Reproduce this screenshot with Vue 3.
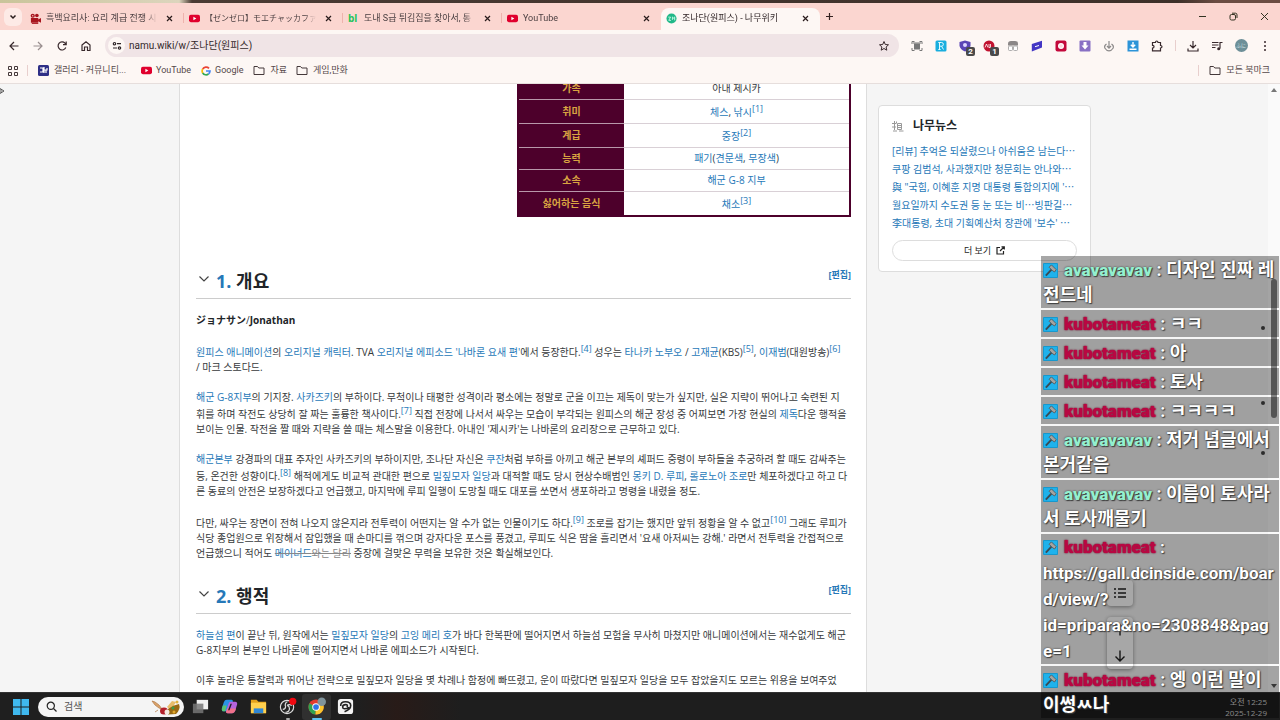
<script setup>
const tabs = [
  { icon: 'cam', title: '흑백요리사: 요리 계급 전쟁 시', active: false },
  { icon: 'yt', title: '【ゼンゼロ】モエチャッカファイ', active: false, ja: true },
  { icon: 'bl', title: '도내 S급 튀김집을 찾아서, 통', active: false },
  { icon: 'yt', title: 'YouTube', active: false },
  { icon: 'namu', title: '조나단(원피스) - 나무위키', active: true }
]

const news = [
  '[리뷰] 추억은 되살렸으나 아쉬움은 남는다⋯',
  '쿠팡 김범석, 사과했지만 청문회는 안나와⋯',
  '與 "국힘, 이혜훈 지명 대통령 통합의지에 \'⋯',
  '월요일까지 수도권 등 눈 또는 비⋯빙판길⋯',
  '李대통령, 초대 기획예산처 장관에 \'보수\' ⋯'
]

const chat = [
  { user: 'avavavavav', tone: 'mint', text: '디자인 진짜 레전드네' },
  { user: 'kubotameat', tone: 'red', text: 'ㅋㅋ' },
  { user: 'kubotameat', tone: 'red', text: '아' },
  { user: 'kubotameat', tone: 'red', text: '토사' },
  { user: 'kubotameat', tone: 'red', text: 'ㅋㅋㅋㅋ' },
  { user: 'avavavavav', tone: 'mint', text: '저거 념글에서 본거같음' },
  { user: 'avavavavav', tone: 'mint', text: '이름이 토사라서 토사깨물기' },
  { user: 'kubotameat', tone: 'red', text: 'https://gall.dcinside.com/board/view/?id=pripara&no=2308848&page=1', url: true },
  { user: 'kubotameat', tone: 'red', text: '엥 이런 말이 이썽ㅆ나' }
]
</script>

<template>
  <div class="screen">
    <div class="backdrop"></div>

    <header class="browser">
      <div class="tabstrip">
        <button class="tabsearch" aria-label="탭 검색">
          <svg width="8" height="8" viewBox="0 0 8 8"><path d="M1.5 2.500 4 5l2.500-2.500" fill="none" stroke="#2a1c1c" stroke-width="1.500" /></svg>
        </button>
        <div v-for="(t, i) in tabs" :key="i" class="tab" :class="{ active: t.active, last: i === 3 }">
          <svg v-if="t.icon === 'cam'" class="fav" viewBox="0 0 12 12"><circle cx="3" cy="3" r="2.300" fill="#a8151e" /><circle cx="7.500" cy="2.700" r="2" fill="#a8151e" /><path d="M1 5.500h8v5H1zM9 7l3-1.500v5L9 9z" fill="#a8151e" /><path d="M2 11.500h7" stroke="#a8151e" /><circle cx="3" cy="3" r=".7" fill="#fbd6d0" /></svg>
          <svg v-else-if="t.icon === 'yt'" class="fav" viewBox="0 0 12 12"><rect y="2" width="12" height="8" rx="2" fill="#e0002d" /><path d="M4.800 4.200v3.600L8 6z" fill="#fff" /></svg>
          <span v-else-if="t.icon === 'bl'" class="fav bl">bl</span>
          <svg v-else class="fav" viewBox="0 0 12 12"><circle cx="6" cy="6" r="5.500" fill="#20b888" /><path d="M2.500 4.500h2.500L3 8h2.500M7 4v3.500M7 5.500h2.500M9.500 4v4" fill="none" stroke="#d8fff0" stroke-width=".9" /></svg>
          <span class="title" :class="{ ja: t.ja }">{{ t.title }}</span>
          <button class="close" aria-label="탭 닫기">
            <svg width="7" height="7" viewBox="0 0 7 7"><path d="M1 1l5 5M6 1 1 6" stroke="#2a1c1c" stroke-width="1.200" /></svg>
          </button>
        </div>
        <button class="newtab" aria-label="새 탭"><svg width="9" height="9" viewBox="0 0 9 9"><path d="M4.500 1v7M1 4.500h7" stroke="#33201f" stroke-width="1.200" /></svg></button>
        <div class="wincontrols">
          <button aria-label="최소화"><svg width="9" height="9" viewBox="0 0 9 9"><path d="M1 4.500h7" stroke="#332" /></svg></button>
          <button aria-label="창 복원"><svg width="9" height="9" viewBox="0 0 9 9" fill="none" stroke="#332"><rect x="1" y="2.500" width="5.500" height="5.500" rx="1.500" /><path d="M3 1.200h3.500Q8 1.200 8 2.800V6" /></svg></button>
          <button aria-label="닫기"><svg width="9" height="9" viewBox="0 0 9 9"><path d="M1 1l7 7M8 1 1 8" stroke="#332" /></svg></button>
        </div>
      </div>

      <div class="toolbar">
        <button class="tool" aria-label="뒤로"><svg viewBox="0 0 12 12"><path d="M10.500 6h-8M6 2 2 6l4 4" class="ln" /></svg></button>
        <button class="tool dim" aria-label="앞으로"><svg viewBox="0 0 12 12"><path d="M1.500 6h8M6 2l4 4-4 4" class="ln" /></svg></button>
        <button class="tool" aria-label="새로고침"><svg viewBox="0 0 12 12"><path d="M9.800 7.500A4 4 0 1 1 9 3.200L10 4.300M10.200 1.500v3.200H7" class="ln" /></svg></button>
        <button class="tool" aria-label="홈"><svg viewBox="0 0 12 12"><path d="M2 5 6 1.700 10 5v5.500H7.500V7h-3v3.500H2z" class="ln" /></svg></button>
        <div class="omnibox">
          <span class="site"><svg width="10" height="10" viewBox="0 0 10 10" fill="none" stroke="#2e2527" stroke-width="1.200"><circle cx="2.500" cy="2.700" r="1.200" /><path d="M5 2.700h4M1 7h4" /><circle cx="7.500" cy="7" r="1.200" /></svg></span>
          <input aria-label="주소창" value="namu.wiki/w/조나단(원피스)" />
          <button class="tool" aria-label="북마크에 추가"><svg viewBox="0 0 12 12"><path d="M6 1.500l1.300 3 3.200.3L8.100 7l.7 3.200L6 8.500l-2.800 1.700L3.900 7 1.500 4.800l3.200-.3z" class="ln thin" /></svg></button>
        </div>
        <div class="extensions">
          <button class="tool" aria-label="캡처"><svg viewBox="0 0 12 12"><rect x="3" y="3.500" width="6" height="6" fill="#777" /><path d="M1 4V1.500h2.500M8.500 1.500H11V4M11 8v2.500H8.500M3.500 10.500H1V8M2 3h8" fill="none" stroke="#777" /></svg></button>
          <button class="tool" aria-label="R 확장"><svg viewBox="0 0 12 12"><rect x=".5" y=".5" width="11" height="11" rx="1.500" fill="#19aede" /><path d="M4.500 9.500v-7h2a1.800 1.800 0 0 1 0 3.700h-2M6.500 6.200 8.500 9.500M3.300 9.500h2.300M3.300 2.500h2" stroke="#e4faff" fill="none" /></svg></button>
          <button class="tool" aria-label="추적 방지"><svg viewBox="0 0 12 12"><path d="M.5 2 6 .5 11.500 2v4Q10 10.500 6 11.500 1.500 9.500.5 6z" fill="#5a45b5" /><circle cx="6" cy="5" r="2" fill="#dcd6ff" /></svg><span class="count">2</span></button>
          <button class="tool" aria-label="광고 차단"><svg viewBox="0 0 12 12"><circle cx="6" cy="6" r="5.500" fill="#c1122f" /><path d="M2 7.500 3.500 4 5 7.500M6 4v3.500h1.500V4" fill="none" stroke="#fff" stroke-width=".8" /></svg><span class="count">1</span></button>
          <button class="tool" aria-label="스크립트"><svg viewBox="0 0 12 12"><path d="M1 5.500V3.500Q1 1 4 1h4q3 0 3 2.500v2z" fill="#8b8787" /><rect x="1.500" y="6" width="4" height="4.500" rx="1" fill="#fff" stroke="#999" stroke-width=".8" /><rect x="6.500" y="6" width="4" height="4.500" rx="1" fill="#fff" stroke="#999" stroke-width=".8" /></svg></button>
          <button class="tool" aria-label="메모"><svg viewBox="0 0 12 12"><path d="M.8 4 11 .8v6.700L.8 11.500z" fill="#4336c4" /><path d="M4 6.700 8 5.500" stroke="#fff" /></svg></button>
          <button class="tool" aria-label="녹화"><svg viewBox="0 0 12 12"><rect x=".5" y=".5" width="11" height="11" rx="2" fill="#c3093b" /><circle cx="6" cy="6" r="3" fill="#fff" /><circle cx="6" cy="6" r="1.800" fill="#ffd6de" /></svg></button>
          <button class="tool" aria-label="저장"><svg viewBox="0 0 12 12"><rect x=".5" y=".5" width="11" height="11" rx="1" fill="#8870c4" /><path d="M4.500 2h3v3.500h2L6 9.500 2.500 5.500h2z" fill="#fff" /></svg></button>
          <button class="tool" aria-label="수집"><svg viewBox="0 0 12 12"><path d="M6 1v7M4 6l2 2.200L8 6M3.500 4Q1 5.500 1.800 8 3.500 10.800 6 10.800T10.200 8Q11 5.500 8.500 4" fill="none" stroke="#8c8a8a" stroke-width="1.200" /></svg></button>
          <button class="tool" aria-label="내려받기"><svg viewBox="0 0 12 12"><rect x=".5" y=".5" width="11" height="11" fill="#2c94d8" /><path d="M6 2v4.500M3.800 4.800 6 7l2.200-2.200M2.500 9.300h7" fill="none" stroke="#fff" stroke-width="1.400" /></svg></button>
          <button class="tool" aria-label="확장 프로그램"><svg viewBox="0 0 12 12"><path d="M1.500 2.500h3q0-1.500 1.200-1.500T7 2.500h2.500v3Q11 5.500 11 6.700T9.500 8v2.800h-8V8q1.500 0 1.500-1.300T1.500 5.400z" class="ln" /></svg></button>
          <i class="divider"></i>
          <button class="tool" aria-label="다운로드"><svg viewBox="0 0 12 12"><path d="M6 1v6.500M3 5l3 3 3-3M1 8.500V11h10V8.500" class="ln" /></svg></button>
          <button class="tool" aria-label="미디어"><svg viewBox="0 0 12 12"><path d="M1 2.500h6.500M1 5h6.500M1 7.500h3.500M9 8.500V2.500h2.500" class="ln" /><circle cx="7.700" cy="8.700" r="1.500" fill="#38292c" /></svg></button>
          <button class="tool" aria-label="프로필"><span class="avatar">ふに</span></button>
          <button class="tool" aria-label="메뉴"><svg viewBox="0 0 12 12" fill="#38292c"><circle cx="6" cy="2" r="1" /><circle cx="6" cy="6" r="1" /><circle cx="6" cy="10" r="1" /></svg></button>
        </div>
      </div>

      <nav class="bookmarks">
        <button class="apps" aria-label="앱"><svg width="10" height="10" viewBox="0 0 10 10" fill="none" stroke="#44383a"><path d="M.5 .5h3v3h-3zM6.500 .5h3v3h-3zM.5 6.500h3v3h-3zM6.500 6.500h3v3h-3z" /></svg></button>
        <i class="divider"></i>
        <a href="#" class="gallery"><svg width="11" height="11" viewBox="0 0 11 11"><rect width="11" height="11" rx="1.500" fill="#2e2f86" /><path d="M2 3h3v4H2M6 2v6M6 5h3V3M8 5v3" fill="none" stroke="#fff" stroke-width="1.200" /></svg>갤러리 - 커뮤니티...</a>
        <a href="#"><svg width="11" height="11" viewBox="0 0 12 12"><rect y="2" width="12" height="8" rx="2" fill="#e0002d" /><path d="M4.800 4.200v3.600L8 6z" fill="#fff" /></svg>YouTube</a>
        <a href="#"><svg width="10" height="10" viewBox="0 0 10 10" fill="none" stroke-width="1.700"><path d="M8 2.300A4 4 0 0 0 1.700 3" stroke="#ea4335" /><path d="M1.700 3a4 4 0 0 0 0 4" stroke="#fbbc05" /><path d="M1.700 7A4 4 0 0 0 7.500 8" stroke="#34a853" /><path d="M7.500 8A4 4 0 0 0 9 5H5" stroke="#4285f4" /></svg>Google</a>
        <a href="#" class="dir"><svg width="12" height="11" viewBox="0 0 12 11"><path d="M1 1.500h3.500l1.300 1.500H11v6.500H1z" fill="none" stroke="#44383a" /></svg>자료</a>
        <a href="#" class="dir"><svg width="12" height="11" viewBox="0 0 12 11"><path d="M1 1.500h3.500l1.300 1.500H11v6.500H1z" fill="none" stroke="#44383a" /></svg>게임,만화</a>
        <div class="allmarks"><i class="divider"></i>
          <a href="#" class="dir"><svg width="12" height="11" viewBox="0 0 12 11"><path d="M1 1.500h3.500l1.300 1.500H11v6.500H1z" fill="none" stroke="#44383a" /></svg>모든 북마크</a></div>
      </nav>
    </header>

    <main class="page">
      <span class="cursor"><svg width="5" height="8" viewBox="0 0 5 8"><path d="M0 1.500 4 4 0 6.500M1 2v4" fill="none" stroke="#555" /></svg></span>
      <article class="wiki">
        <table class="info">
          <tbody>
            <tr><th scope="row">가족</th><td>아내 제시카</td></tr>
            <tr><th scope="row">취미</th><td><a href="#">체스</a>, <a href="#">낚시<sup>[1]</sup></a></td></tr>
            <tr><th scope="row">계급</th><td><a href="#">중장<sup>[2]</sup></a></td></tr>
            <tr><th scope="row">능력</th><td><a href="#">패기</a>(<a href="#">견문색</a>, <a href="#">무장색</a>)</td></tr>
            <tr><th scope="row">소속</th><td><a href="#">해군 G-8 지부</a></td></tr>
            <tr><th scope="row">싫어하는 음식</th><td><a href="#">채소<sup>[3]</sup></a></td></tr>
          </tbody>
        </table>

        <div class="heading first">
          <svg class="chev" viewBox="0 0 12 8"><path d="M1.500 1.500 6 6l4.500-4.500" fill="none" stroke="#444" stroke-width="1.200" /></svg>
          <h2><a href="#">1.</a> 개요</h2>
          <a href="#" class="edit">[편집]</a>
        </div>
        <p><b>ジョナサン</b>/<b>Jonathan</b></p>
        <p><a href="#">원피스 애니메이션</a>의 <a href="#">오리지널 캐릭터</a>. TVA <a href="#">오리지널 에피소드 '나바론 요새 편'</a>에서 등장한다.<a href="#"><sup>[4]</sup></a> 성우는 <a href="#">타나카 노부오</a> / <a href="#">고재균</a>(KBS)<a href="#"><sup>[5]</sup></a>, <a href="#">이재범</a>(대원방송)<a href="#"><sup>[6]</sup></a><br>/ 마크 스토다드.</p>
        <p><a href="#">해군 G-8지부</a>의 기지장. <a href="#">사카즈키</a>의 부하이다. 무척이나 태평한 성격이라 평소에는 정말로 군을 이끄는 제독이 맞는가 싶지만, 실은 지략이 뛰어나고 숙련된 지<br>휘를 하며 작전도 상당히 잘 짜는 훌륭한 책사이다.<a href="#"><sup>[7]</sup></a> 직접 전장에 나서서 싸우는 모습이 부각되는 원피스의 해군 장성 중 어찌보면 가장 현실의 <a href="#">제독</a>다운 행적을<br>보이는 인물. 작전을 짤 때와 지략을 쓸 때는 체스말을 이용한다. 아내인 '제시카'는 나바론의 요리장으로 근무하고 있다.</p>
        <p><a href="#">해군본부</a> 강경파의 대표 주자인 사카즈키의 부하이지만, 조나단 자신은 <a href="#">쿠잔</a>처럼 부하를 아끼고 해군 본부의 셰퍼드 중령이 부하들을 추궁하려 할 때도 감싸주는<br>등, 온건한 성향이다.<a href="#"><sup>[8]</sup></a> 해적에게도 비교적 관대한 편으로 <a href="#">밀짚모자 일당</a>과 대적할 때도 당시 현상수배범인 <a href="#">몽키 D. 루피</a>, <a href="#">롤로노아 조로</a>만 체포하겠다고 하고 다<br>른 동료의 안전은 보장하겠다고 언급했고, 마지막에 루피 일행이 도망칠 때도 대포를 쏘면서 생포하라고 명령을 내렸을 정도.</p>
        <p>다만, 싸우는 장면이 전혀 나오지 않은지라 전투력이 어떤지는 알 수가 없는 인물이기도 하다.<a href="#"><sup>[9]</sup></a> 조로를 잡기는 했지만 앞뒤 정황을 알 수 없고<a href="#"><sup>[10]</sup></a> 그래도 루피가<br>식당 종업원으로 위장해서 잠입했을 때 손마디를 꺾으며 강자다운 포스를 풍겼고, 루피도 식은 땀을 흘리면서 '요새 아저씨는 강해.' 라면서 전투력을 간접적으로<br>언급했으니 적어도 <del><a href="#">메이너드</a>와는 달리</del> 중장에 걸맞은 무력을 보유한 것은 확실해보인다.</p>

        <div class="heading">
          <svg class="chev" viewBox="0 0 12 8"><path d="M1.500 1.500 6 6l4.500-4.500" fill="none" stroke="#444" stroke-width="1.200" /></svg>
          <h2><a href="#">2.</a> 행적</h2>
          <a href="#" class="edit">[편집]</a>
        </div>
        <p><a href="#">하늘섬 편</a>이 끝난 뒤, 원작에서는 <a href="#">밀짚모자 일당</a>의 <a href="#">고잉 메리 호</a>가 바다 한복판에 떨어지면서 하늘섬 모험을 무사히 마쳤지만 애니메이션에서는 재수없게도 해군<br>G-8지부의 본부인 나바론에 떨어지면서 나바론 에피소드가 시작된다.</p>
        <p>이후 놀라운 통찰력과 뛰어난 전략으로 밀짚모자 일당을 몇 차례나 함정에 빠뜨렸고, 운이 따랐다면 밀짚모자 일당을 모두 잡았을지도 모르는 위용을 보여주었</p>
      </article>

      <aside class="side">
        <section class="card">
          <h3><svg width="12" height="12" viewBox="0 0 12 12" fill="none" stroke="#999"><path d="M0 3.500h4M2.500 1v9M4.500 1.500v2M0 7h4M5.500 3.500h4v6h-4zM5.500 5.500h4M5.500 7.500h4M1 11h4M7 11h4.500" /></svg>나무뉴스</h3>
          <ul><li v-for="n in news" :key="n"><a href="#">{{ n }}</a></li></ul>
          <button class="more">더 보기
            <svg width="9" height="9" viewBox="0 0 9 9" fill="none" stroke="#222" stroke-width="1.200"><path d="M4 1.500H1v6.500h6.500V5M5.500.8h2.800v2.800M8 1 4 5" /></svg>
          </button>
        </section>
      </aside>

      <div class="jump">
        <button class="toc" aria-label="목차"><svg width="12" height="12" viewBox="0 0 12 12" stroke="#222" stroke-width="1.500"><path d="M4 2h8M4 6h8M4 10h8M0 2h2M0 6h2M0 10h2" /></svg></button>
        <div class="pair">
          <button aria-label="위로"><svg width="12" height="12" viewBox="0 0 12 12" fill="none" stroke="#222" stroke-width="1.400"><path d="M6 11.500V1M1.500 5.500 6 1l4.500 4.500" /></svg></button>
          <button aria-label="아래로"><svg width="12" height="12" viewBox="0 0 12 12" fill="none" stroke="#222" stroke-width="1.400"><path d="M6 .5V11M1.500 6.500 6 11l4.500-4.500" /></svg></button>
        </div>
      </div>

      <div class="scroll">
        <svg width="8" height="6" viewBox="0 0 8 6"><path d="M1 5 4 1l3 4z" fill="#777" /></svg>
        <i class="thumb"></i>
        <svg class="down" width="8" height="6" viewBox="0 0 8 6"><path d="M1 1l3 4 3-4z" fill="#555" /></svg>
      </div>
      <i class="mark m1"></i><i class="mark m2"></i><i class="mark m3"></i>
    </main>

    <footer class="taskbar">
      <button class="start" aria-label="시작"><svg width="16" height="16" viewBox="0 0 16 16" fill="#3fb8ee"><path d="M0 0h7.500v7.500H0zM8.500 0H16v7.500H8.500zM0 8.500h7.500V16H0zM8.500 8.500H16V16H8.500z" /></svg></button>
      <label class="search">
        <svg width="11" height="11" viewBox="0 0 11 11" fill="none" stroke="#222" stroke-width="1.200"><circle cx="4.800" cy="4.800" r="3.600" /><path d="M7.500 7.500 10.500 10.500" /></svg>
        <input placeholder="검색" aria-label="검색" />
        <svg width="30" height="16" viewBox="0 0 30 16"><path d="M1 2l3 1 4 3 3 4-3-1-4-3zM4 13l3-2" fill="#d9a36b" stroke="#b98250" stroke-width=".8" /><path d="M16 8 21 2l4 1-5 8z" fill="#e8bd6a" /><path d="M17 10Q22 6 28 5q2 5-3 10l-8 .5z" fill="#9a6a12" /><ellipse cx="13" cy="12" rx="4" ry="3.500" fill="#b3202a" /><ellipse cx="16" cy="13" rx="2.500" ry="2.500" fill="#f5e9e0" /><circle cx="22" cy="9" r="1.500" fill="#3e9b4a" /><circle cx="26" cy="3" r="1.500" fill="#e2b33c" /><circle cx="23" cy="13" r="1.500" fill="#e1a82b" /></svg>
      </label>
      <button class="app" aria-label="작업 보기"><svg viewBox="0 0 20 20"><rect x="6" y="3" width="12" height="10" fill="#f0f0f0" /><rect x="2" y="7" width="11" height="10" fill="#777" opacity=".85" /></svg></button>
      <button class="app" aria-label="Copilot"><svg viewBox="0 0 20 20"><path d="M7 3h5q2 0 1.500 2L11 13q-.5 2-2 2H4q-2.500 0-2-3l2-6.500Q5 3 7 3z" fill="#2a93e4" /><path d="M2 12l1-3h4l-1.500 6H4q-2.500 0-2-3z" fill="#58c370" /><path d="M13 17H8q-2 0-1.500-2L9 7q.5-2 2-2h5q2.500 0 2 3l-2 6.500Q15 17 13 17z" fill="#b564dd" /><path d="M13 17H8q-2 0-1.500-2l1-3h9.300L16 14.500Q15 17 13 17z" fill="#f0718a" /><path d="M8.500 14 11 7h1.500L10 14z" fill="#1f1f1f" /></svg></button>
      <button class="app" aria-label="파일 탐색기"><svg viewBox="0 0 20 20"><path d="M2 3h6l2 2h8v12H2z" fill="#e4a21c" /><path d="M2 6h16v11H2z" fill="#ffd04e" /><path d="M5 12h10v5H5z" fill="#2f87d6" /></svg></button>
      <button class="app run" aria-label="OBS"><svg viewBox="0 0 20 20"><circle cx="9.500" cy="10.500" r="7" fill="#222" stroke="#ddd" stroke-width="1.200" /><path d="M10 5a3.500 3.500 0 0 0-2 5 3 3 0 0 1-3 3M14.500 9a3.500 3.500 0 0 0-5 0M8 16a3.500 3.500 0 0 0 4-4 3 3 0 0 0-2-3" fill="none" stroke="#ddd" stroke-width="1.300" /><circle cx="15.500" cy="4.500" r="3.800" fill="#f00810" /></svg></button>
      <button class="app run on" aria-label="Chrome"><svg viewBox="0 0 20 20"><circle cx="9.500" cy="10.500" r="8" fill="#e33b2e" /><path d="M9.500 10.500 2.600 6.500a8 8 0 0 0 6.400 12z" fill="#2fa24f" /><path d="M9.500 10.500 9 18.500a8 8 0 0 0 7.500-12z" fill="#fcc62d" /><circle cx="9.500" cy="10.500" r="4" fill="#fff" /><circle cx="9.500" cy="10.500" r="3" fill="#2d74e8" /><circle cx="15.500" cy="5" r="4.500" fill="#7f949c" /></svg></button>
      <button class="app" aria-label="Clip Studio"><svg viewBox="0 0 20 20"><rect x="2" y="2" width="16" height="16" rx="3" fill="#f3f3f3" /><path d="M5 9.500Q4.500 5 10 5t5.500 4-6.500 6.500M14 11Q7 14 7 10.500 7 8 10 8t1.500 2.500" fill="none" stroke="#222" stroke-width="1.700" /></svg></button>
      <div class="clock"><span>오전 12:25</span><span>2025-12-29</span></div>
    </footer>

    <section class="chat" aria-label="채팅">
      <p v-for="(c, i) in chat" :key="i" :class="{ url: c.url }">
        <svg class="badge" viewBox="0 0 16 16"><rect width="16" height="16" rx="1" fill="#1797cb" /><rect x="1" y="1" width="14" height="14" fill="#1fb2ec" /><path d="M3 13.500 9 7" stroke="#3a4a52" stroke-width="2" /><path d="M6.500 4.500 9 2l5 5-1.500 2.500-2-1z" fill="#a6a39f" stroke="#4b565c" stroke-width=".9" /></svg>
        <b :class="c.tone">{{ c.user }}</b> : {{ c.text }}
      </p>
    </section>
  </div>
</template>

<style>
html, body { margin: 0; overflow: hidden; }
</style>

<style scoped>
* { box-sizing: border-box; }
.screen { position: relative; display: flex; flex-direction: column; height: 100vh; overflow: hidden; font: 10px/15px "Open Sans", "Noto Sans CJK KR", sans-serif; color: #373a3c; background: #f5f5f5; }
button { border: 0; padding: 0; background: none; font: inherit; color: inherit; display: flex; align-items: center; justify-content: center; }
input { border: 0; padding: 0; background: none; font: inherit; color: inherit; outline: 0; min-width: 0; flex: 1; }
a { color: #2678b8; text-decoration: none; }
svg { display: block; flex: none; }
.backdrop { height: 3px; flex: none; background: linear-gradient(90deg, #c9c49a 0, #dcd5bd 14%, #4a3a33 15%, #3d3029 92%, #6b4c42 95%); }
.browser { flex: none; background: #fdf7f4; border-bottom: 1px solid #e6dedc; font-family: Roboto, "Noto Sans CJK KR", sans-serif; font-size: 9px; color: #4c4042; }
.tabstrip { display: flex; align-items: center; height: 27px; padding-left: 4px; background: #fbd6d0; }
.tabsearch { width: 18px; height: 18px; margin-right: 3px; border-radius: 6px; background: #fdeae6; }
.tab { position: relative; display: flex; align-items: center; width: 159px; height: 22px; margin-top: 5px; padding: 0 10px 2px 5px; }
.tab::after { content: ""; position: absolute; right: 0; top: 5px; width: 1px; height: 10px; background: #eeb3ad; }
.tab.active::after, .tab.last::after { display: none; }
.tab.active { background: #fdf7f4; border-radius: 8px 8px 0 0; color: #33282a; }
.fav { width: 11px; height: 11px; flex: none; margin-right: 5px; }
.bl { color: #1fc45c; font: bold 10px/11px "Open Sans", sans-serif; }
.title { flex: 1; overflow: hidden; white-space: nowrap; margin-right: 8px; mask-image: linear-gradient(90deg, #000 90%, transparent); }
.title.ja { font-size: 8px; }
.close { width: 9px; height: 12px; }
.newtab { width: 18px; height: 18px; }
.wincontrols { display: flex; margin-left: auto; }
.wincontrols button { width: 31px; height: 24px; }
.toolbar { display: flex; align-items: center; height: 31px; padding: 0 3px 0 2px; }
.tool { position: relative; width: 24px; height: 24px; flex: none; }
.tool svg { width: 12px; height: 12px; }
.dim { opacity: .5; }
.ln { fill: none; stroke: #38292c; stroke-width: 1.2; }
.thin { stroke-width: 1; }
.omnibox { display: flex; align-items: center; flex: 1; height: 23px; margin: 0 6px 0 7px; padding: 0 3px; border-radius: 12px; background: #f0e4e6; font-size: 10px; color: #33282a; }
.site { display: flex; align-items: center; justify-content: center; width: 17px; height: 17px; margin-right: 4px; border-radius: 50%; background: #fdf7f4; }
.extensions { display: flex; align-items: center; }
.divider { width: 1px; height: 11px; background: #e8cfcd; }
.extensions .divider { margin: 0 5px 0 6px; }
.count { position: absolute; right: 2px; bottom: 2px; width: 9px; height: 9px; border-radius: 2px; background: #4a4a4a; color: #fff; font: bold 8px/9px Roboto, sans-serif; text-align: center; }
.avatar { width: 13px; height: 13px; border-radius: 50%; background: #6d8f98; color: #d4e3e6; font-size: 5px; line-height: 13px; text-align: center; }
.bookmarks { display: flex; align-items: center; height: 22px; padding: 0 10px 3px 8px; }
.bookmarks a { display: flex; align-items: center; gap: 4px; margin-right: 10px; color: #55484a; }
.bookmarks .divider { margin: 0 10px 0 9px; }
.bookmarks .gallery { gap: 5px; margin-right: 15px; }
.bookmarks .dir { gap: 5px; margin-right: 9px; }
.allmarks { display: flex; align-items: center; margin-left: auto; }
.bookmarks .allmarks a { margin-right: 0; }

.page { position: relative; flex: 1; min-height: 0; overflow: hidden; display: flex; align-items: flex-start; padding-left: 179px; }
.cursor { position: absolute; left: 0; top: 3px; }
.wiki { flex: none; width: 688px; height: 640px; padding: 0 15px 0 16px; background: #fff; border: solid #ddd; border-width: 0 1px; white-space: nowrap; }
.info { width: 334px; margin: -8px 0 0 auto; border-collapse: collapse; border: 2px solid #4d002b; text-align: center; }
.info th { width: 106px; background: #4d002b; color: #d9a441; font-weight: 700; }
.info th, .info td { padding: 3px 0; border-top: 1px solid #d9d0d6; }
.info th { border-top-color: #b898aa; }
sup { font-size: 9px; line-height: 12px; vertical-align: 4px; }
.heading { display: flex; align-items: center; height: 36px; margin-top: 17px; border-bottom: 1px solid #ccc; }
.heading.first { margin-top: 46px; }
.chev { width: 12px; height: 8px; margin: 0 6px 3px 2px; }
h2 { margin: 0; font-size: 18px; line-height: 28px; color: #212529; }
.edit { margin: 0 0 13px auto; font-size: 9px; font-weight: 700; }
.wiki p { margin: 15px 0 0; }
.wiki .heading + p { margin-top: 14px; }
.wiki b { color: #212529; }
del { color: #888; }

.side { flex: none; width: 213px; margin: 21px 0 0 11px; }
.card { padding: 11px 13px 10px; border: 1px solid #ddd; border-radius: 4px; background: #fff; }
h3 { display: flex; align-items: center; gap: 9px; margin: 0 0 7px; font-size: 12px; line-height: 18px; color: #212529; }
ul { list-style: none; margin: 0; padding: 0; }
li { line-height: 18px; height: 18px; white-space: nowrap; }
.more { width: 100%; height: 21px; margin-top: 8px; gap: 5px; border: 1px solid #ddd; border-radius: 11px; font-size: 9px; color: #222; }
.jump { position: absolute; left: 1107px; bottom: 23px; display: flex; flex-direction: column; gap: 11px; }
.jump button { width: 26px; height: 26px; }
.toc, .pair { background: #fff; border-radius: 4px; box-shadow: 0 1px 4px #0006; }
.scroll { position: absolute; right: 0; top: 0; bottom: 0; width: 12px; display: flex; flex-direction: column; align-items: center; padding: 3px 0; background: #fafafa; }
.thumb { width: 6px; height: 139px; margin-top: 186px; border-radius: 3px; background: #828282; }
.down { margin-top: auto; }
.mark { position: absolute; right: 15px; width: 4px; height: 4px; border-radius: 50%; background: #444; }
.m1 { top: 242px; } .m2 { top: 317px; } .m3 { top: 367px; }

.taskbar { flex: none; display: flex; align-items: center; height: 28px; padding: 0 13px; background: linear-gradient(90deg, #1f1f1f 28%, #281b18 31%, #1e1e1e 36%); border-top: 1px solid #333; }
.start { width: 16px; margin-right: 9px; }
.search { display: flex; align-items: center; gap: 7px; width: 146px; height: 20px; margin-right: 2px; padding: 0 3px 0 8px; border-radius: 10px; background: #f4f4f4; color: #444; font-size: 10px; }
.search input::placeholder { color: #555; opacity: 1; }
.app { position: relative; width: 29px; height: 26px; }
.app svg { width: 19px; height: 19px; }
.on { background: #303030; border-radius: 3px; }
.run::after { content: ""; position: absolute; bottom: 0; width: 4px; height: 2px; border-radius: 1px; background: #aaa; }
.on::after { width: 10px; background: #5dc0f2; }
.clock { display: flex; flex-direction: column; margin-left: auto; text-align: right; font-size: 8px; line-height: 11px; color: #d0d0d0; }

.chat { position: absolute; left: 1041px; right: 1px; top: 256px; display: flex; flex-direction: column; gap: 2px; font: 700 18px/25px Roboto, "Noto Sans CJK KR", sans-serif; color: #fff; text-shadow: 0 0 2px #333, 1px 1px 1px #444; }
.chat p { margin: 0; padding: 1px 2px; background: #00000058; overflow-wrap: anywhere; }
.chat .url { padding: 0 2px; font-size: 17px; line-height: 26px; }
.chat b { font-size: 17px; line-height: 17px; }
.badge { display: inline-block; width: 15px; height: 15px; margin-right: 6px; vertical-align: -2px; }
.mint { color: #94f0cf; }
.red { color: #b80742; text-shadow: 0 0 1px #b80742, 0 0 2px #5a0020; }
</style>
